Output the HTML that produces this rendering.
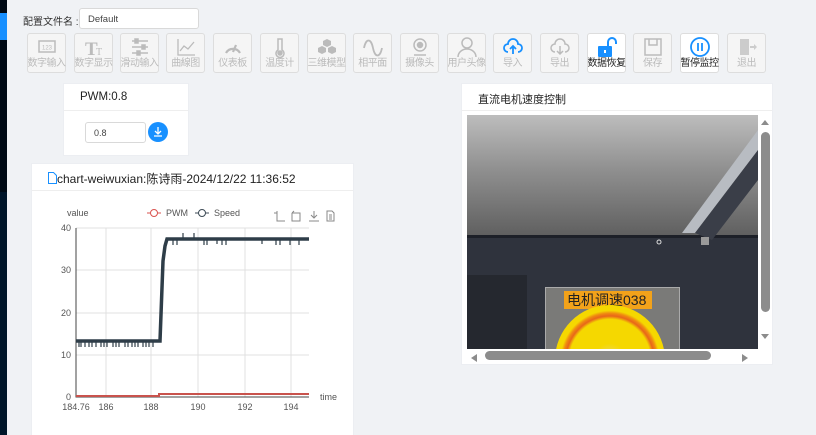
<!DOCTYPE html>
<html><head><meta charset="utf-8"><style>
*{box-sizing:border-box;margin:0;padding:0}
html,body{width:816px;height:435px;overflow:hidden}
body{background:#f0f2f5;position:relative;font-family:"Liberation Sans","Noto Sans CJK SC",sans-serif;color:#333}
.side{position:absolute;left:0;top:0;width:7px;height:435px;background:linear-gradient(#000a14 0,#000a14 192px,#001529 192px)}
.sideb{position:absolute;left:0;top:13px;width:7px;height:27px;background:#1890ff}
.lbl{position:absolute;left:23px;top:13px;font-size:10px;color:#333}
.inp{position:absolute;left:79px;top:8px;width:120px;height:21px;background:#fff;border:1px solid #d9d9d9;border-radius:3px;font-size:9.5px;padding:5px 8px;color:#444}
.btn{position:absolute;top:33px;width:39px;height:40px;border:1px solid #ddd;border-radius:3px;background:#f5f5f5;text-align:center;font-size:10px;color:#bbb}
.btn.act{background:#fff;color:#222}
.btn svg{display:block;margin:2px auto 0;width:22px;height:22px}
.btn span{position:absolute;left:-2px;right:-2px;bottom:3px;white-space:nowrap;letter-spacing:-.5px}
.card{position:absolute;background:#fff;border:1px solid #eceef2}
.hd{height:27px;border-bottom:1px solid #eee;font-size:11px;padding:7px 16px;color:#222}
</style></head><body>
<div class="side"></div><div class="sideb"></div>
<div class="lbl">配置文件名 :</div>
<div class="inp">Default</div>

<div class="btn" style="left:27px"><svg viewBox="0 0 22 22"><rect x="3" y="5" width="16" height="11" fill="none" stroke="#bbb" stroke-width="1.5"/><text x="11" y="13.5" font-size="6" text-anchor="middle" fill="#bbb" font-family="Liberation Sans">123</text></svg><span>数字输入</span></div>
<div class="btn" style="left:74px"><svg viewBox="0 0 22 22"><text x="2" y="19" font-size="19" font-weight="bold" fill="#bbb" font-family="Liberation Serif">T</text><text x="13" y="19" font-size="10" fill="#bbb" font-family="Liberation Serif">T</text></svg><span>数字显示</span></div>
<div class="btn" style="left:120px"><svg viewBox="0 0 22 22" stroke="#bbb" stroke-width="1.5"><path d="M3 5h16M3 11h16M3 17h16"/><rect x="6" y="3" width="3" height="4" fill="#bbb"/><rect x="13" y="9" width="3" height="4" fill="#bbb"/><rect x="8" y="15" width="3" height="4" fill="#bbb"/></svg><span>滑动输入</span></div>
<div class="btn" style="left:166px"><svg viewBox="0 0 22 22" fill="none" stroke="#bbb" stroke-width="1.3"><path d="M3 3v16h17M5 15l4-5 4 3 6-7"/></svg><span>曲線图</span></div>
<div class="btn" style="left:213px"><svg viewBox="0 0 22 22" fill="none" stroke="#bbb" stroke-width="2.2"><path d="M4 17a8 8 0 0 1 14 0M11 16l3-7"/></svg><span>仪表板</span></div>
<div class="btn" style="left:260px"><svg viewBox="0 0 22 22" fill="none" stroke="#bbb" stroke-width="1.5"><path d="M9 3h4v11a4 4 0 1 1-4 0z"/><circle cx="11" cy="17" r="2" fill="#bbb"/></svg><span>温度计</span></div>
<div class="btn" style="left:307px"><svg viewBox="0 0 22 22" fill="#bbb"><path d="M11 3l4 2v4l-4 2-4-2V5zM6 10l4 2v4l-4 2-4-2v-4zM16 10l4 2v4l-4 2-4-2v-4z"/></svg><span>三维模型</span></div>
<div class="btn" style="left:353px"><svg viewBox="0 0 22 22" fill="none" stroke="#bbb" stroke-width="1.8"><path d="M2 12c2-10 7-10 9 0s7 10 9 0"/></svg><span>相平面</span></div>
<div class="btn" style="left:400px"><svg viewBox="0 0 22 22" fill="none" stroke="#bbb" stroke-width="1.5"><circle cx="11" cy="9" r="6"/><circle cx="11" cy="9" r="2.5" fill="#bbb"/><path d="M5 19h12"/></svg><span>摄像头</span></div>
<div class="btn" style="left:447px"><svg viewBox="0 0 22 22" fill="none" stroke="#bbb" stroke-width="1.5"><circle cx="11" cy="7" r="5"/><path d="M2 21a9 8 0 0 1 18 0"/></svg><span>用户头像</span></div>
<div class="btn" style="left:493px"><svg viewBox="0 0 22 22" fill="none" stroke="#1890ff" stroke-width="1.8"><path d="M6 16a4 4 0 0 1 0-8 5 5 0 0 1 10 0 4 4 0 0 1 0 8M11 18v-8M8 13l3-3 3 3"/></svg><span>导入</span></div>
<div class="btn" style="left:540px"><svg viewBox="0 0 22 22" fill="none" stroke="#bbb" stroke-width="1.5"><path d="M6 16a4 4 0 0 1 0-8 5 5 0 0 1 10 0 4 4 0 0 1 0 8M11 10v8M8 15l3 3 3-3"/></svg><span>导出</span></div>
<div class="btn act" style="left:587px"><svg viewBox="0 0 22 22"><rect x="2" y="10" width="14" height="11" rx="1" fill="#1890ff"/><path d="M12 10V6a4 4 0 0 1 8 0v2" fill="none" stroke="#1890ff" stroke-width="2"/><rect x="8" y="14" width="2" height="3" fill="#fff"/></svg><span>数据恢复</span></div>
<div class="btn" style="left:633px"><svg viewBox="0 0 22 22" fill="none" stroke="#bbb" stroke-width="1.5"><rect x="3" y="3" width="16" height="16"/><path d="M7 3v6h8V3"/></svg><span>保存</span></div>
<div class="btn act" style="left:680px"><svg viewBox="0 0 22 22" fill="none" stroke="#1890ff" stroke-width="1.8"><circle cx="11" cy="11" r="9"/><path d="M9 7v8M13 7v8"/></svg><span>暂停监控</span></div>
<div class="btn" style="left:727px"><svg viewBox="0 0 22 22" fill="#ccc"><path d="M4 3h9v16H4z"/><path d="M14 10h4v-2l3 3-3 3v-2h-4z"/></svg><span>退出</span></div>

<div class="card" style="left:63px;top:83px;width:126px;height:73px">
<div class="hd" style="padding-left:16px;font-size:11.5px">PWM:0.8</div>
<div style="position:absolute;left:21px;top:38px;width:61px;height:21px;border:1px solid #d9d9d9;border-radius:3px;font-size:9px;padding:5px 8px;color:#444">0.8</div>
<div style="position:absolute;left:84px;top:38px;width:20px;height:20px;border-radius:50%;background:#1890ff"><svg viewBox="0 0 20 20" width="20" height="20" fill="none" stroke="#fff" stroke-width="1.3"><path d="M10 5v7M7 9l3 3 3-3M6 14h8"/></svg></div>
</div>

<div class="card" style="left:31px;top:163px;width:323px;height:272px;border-bottom:none">
<div class="hd" style="padding:6px 16px;font-size:12px;color:#222"><svg width="9" height="12" viewBox="0 0 9 12" style="vertical-align:-1px"><path d="M.5.5h5l3 3v8H.5z" fill="none" stroke="#1890ff"/></svg>chart-weiwuxian:陈诗雨-2024/12/22 11:36:52</div>
<svg style="position:absolute;left:-31px;top:-163px" width="360" height="435" viewBox="0 0 360 435" font-family="Liberation Sans" font-size="9" fill="#555">
<g stroke="#e0e0e0" stroke-width="1">
<path d="M75 227h233M75 269h233M75 312h233M75 354h233M105 227v169M150 227v169M197 227v169M244 227v169M290 227v169"/></g>
<path d="M75 227v169h233" stroke="#444" fill="none"/>
<text x="66" y="215">value</text>
<text x="70" y="230" text-anchor="end">40</text><text x="70" y="272" text-anchor="end">30</text><text x="70" y="315" text-anchor="end">20</text><text x="70" y="357" text-anchor="end">10</text><text x="70" y="399" text-anchor="end">0</text>
<text x="75" y="409" text-anchor="middle">184.76</text><text x="105" y="409" text-anchor="middle">186</text><text x="150" y="409" text-anchor="middle">188</text><text x="197" y="409" text-anchor="middle">190</text><text x="244" y="409" text-anchor="middle">192</text><text x="290" y="409" text-anchor="middle">194</text>
<text x="319" y="399">time</text>
<path d="M146 212h14" stroke="#d9534f"/><circle cx="153" cy="212" r="3.5" fill="#fff" stroke="#d9534f"/><text x="165" y="215">PWM</text>
<path d="M194 212h14" stroke="#3c4a55"/><circle cx="201" cy="212" r="3.5" fill="#fff" stroke="#3c4a55"/><text x="213" y="215">Speed</text>
<g fill="none" stroke="#888" stroke-width="1"><path d="M273 212h3v8h8M276 212v-2"/><path d="M291 212h8v8h-8v-8M291 212l2-2"/><path d="M313 210v7M310 214l3 3 3-3M308 220h10"/><path d="M326 210h5l2 2v8h-7zM328 214h3M328 216h3M328 218h3"/></g>
<path d="M75 395H158V393H308" stroke="#c9534d" stroke-width="2" fill="none"/>
<path d="M75 340H159L162 260L164 245L166 238H308" stroke="#2e3d48" stroke-width="3.5" fill="none"/>
<g stroke="#2e3d48" stroke-width="1.2"><path d="M80 340v6M84 340v6M88 340v6M95 340v6M100 340v6M106 340v6M112 340v6M118 340v6M124 340v6M131 340v6M137 340v6M142 340v6M148 340v6M152 340v6M78 340v6M91 340v6M103 340v6M115 340v6M127 340v6M134 340v6M145 340v6M172 238v6M176 238v6M203 238v6M206 238v6M221 238v6M225 238v6M275 238v6M279 238v6M289 238v6M298 238v6M182 238v-6M193 238v-6M216 238v5M261 238v5"/></g>
</svg>
</div>

<div class="card" style="left:461px;top:83px;width:312px;height:282px">
<div class="hd" style="padding:7px 16px;font-size:11px">直流电机速度控制</div>
<div style="position:absolute;left:5px;top:31px;width:291px;height:234px;overflow:hidden;background:#2f333d">
<div style="position:absolute;left:0;top:0;width:291px;height:120px;background:linear-gradient(#bdbdbd,#909090 45%,#606060)"></div>
<div style="position:absolute;left:0;top:120px;width:291px;height:3px;background:#1d2028"></div>
<svg style="position:absolute;left:0;top:0" width="291" height="234"><path d="M291 15L215 118L228 118L291 35z" fill="#b8bcc2"/><path d="M291 35L228 118L245 125L291 65z" fill="#3a3e48"/><rect x="234" y="122" width="8" height="8" fill="#9a9a9a"/><circle cx="192" cy="127" r="2" fill="none" stroke="#ddd"/><rect x="0" y="160" width="60" height="74" fill="#25282f"/></svg>
<div style="position:absolute;left:78px;top:172px;width:135px;height:70px;background:#7a7a78;border:1px solid #aaa"></div>
<div style="position:absolute;left:97px;top:176px;width:88px;height:18px;background:#f2a21a;font-size:14px;color:#222;line-height:18px;padding-left:3px;white-space:nowrap;overflow:hidden">电机调速038</div>
<div style="position:absolute;left:88px;top:190px;width:110px;height:110px;border-radius:50%;background:radial-gradient(circle closest-side,#e8d880 0,#f5d800 30%,#f5d800 74%,#e8651a 80%,#f08a10 85%,#f5d800 90%)"></div>
</div>
<div style="position:absolute;left:297px;top:31px;width:13px;height:234px;background:#fff"><div style="position:absolute;left:2px;top:17px;width:9px;height:180px;border-radius:5px;background:#8c8c8c"></div></div>
<div style="position:absolute;left:5px;top:265px;width:291px;height:13px;background:#fff"><div style="position:absolute;left:18px;top:2px;width:226px;height:9px;border-radius:5px;background:#8c8c8c"></div></div>
<svg style="position:absolute;left:0;top:0" width="312" height="282" fill="#8c8c8c"><path d="M299 41l4-5 4 5zM299 250l4 5 4-5zM15 270l-6 4 6 4zM280 270l6 4-6 4z"/></svg>
</div>
</body></html>
